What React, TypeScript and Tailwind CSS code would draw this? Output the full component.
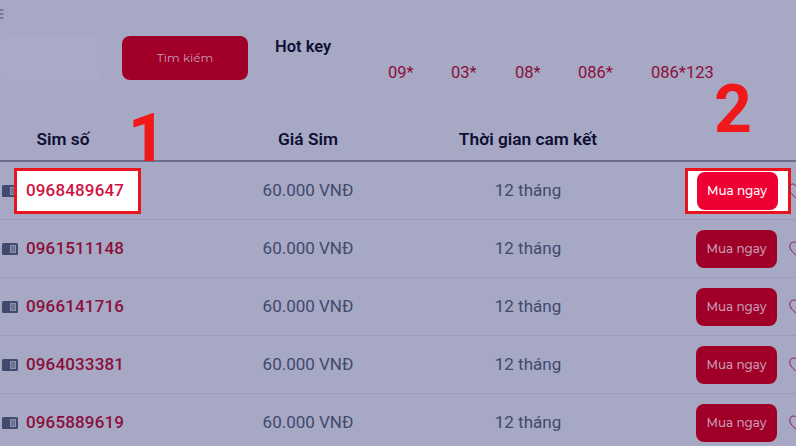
const rows = ['0968489647', '0961511148', '0966141716', '0964033381', '0965889619'];
const hotKeys = [
  { label: '09*', width: 'w-[63px]' },
  { label: '03*', width: 'w-[64px]' },
  { label: '08*', width: 'w-[63px]' },
  { label: '086*', width: 'w-[73px]' },
  { label: '086*123', width: 'w-[70px]' },
];

function SimIcon() {
  return (
    <svg width="16" height="12" viewBox="0 0 16 12" className="shrink-0">
      <rect width="16" height="12" rx="1.5" fill="#3f4a6e" />
      <rect x="8" y="2" width="6" height="8" fill="#8d90ab" />
      <path d="M9 4h4M9 6h4M9 8h4" stroke="#3f4a6e" strokeWidth="0.8" />
    </svg>
  );
}

function Heart() {
  return (
    <svg width="16" height="18" viewBox="0 0 16 18" fill="none" stroke="#8f1a45" strokeWidth="1" className="shrink-0">
      <path d="M8 16C4 12.5 .8 9.8 .8 6.3 .8 3.8 2.6 2 4.6 2 6 2 7.3 2.8 8 4.2 8.7 2.8 10 2 11.4 2c2 0 3.8 1.8 3.8 4.3 0 3.5-3.2 6.2-7.2 9.7z" />
    </svg>
  );
}

export default function App() {
  return (
    <div className="relative w-[796px] h-[446px] overflow-hidden bg-[#a7a8c3] font-['Roboto',sans-serif]">
      <div className="h-[36px] pt-[9px]">
        <svg width="4" height="10" viewBox="0 0 4 10" stroke="#4c4f6b" strokeWidth="1.2">
          <path d="M0 1h3.5M0 5h3.5M0 9h3.5" />
        </svg>
      </div>

      <div className="flex h-[124px] items-start">
        <div className="w-[102px] h-[44px] mt-px bg-[#a9aac5] rounded" />
        <button className="ml-[20px] flex w-[126px] h-[44px] items-center justify-center rounded-lg bg-[#a00028] text-[12px] text-[#c79ab4] font-['Montserrat','Open_Sans',sans-serif]">
          Tìm kiếm
        </button>
        <div className="ml-[27px]">
          <div className="mt-[1px] text-[16.5px] leading-[19px] font-semibold text-[#0e0f33]">Hot key</div>
          <div className="mt-[7px] ml-[113px] flex text-[16.5px] leading-[19px] text-[#8a0f3c]">
            {hotKeys.map((k) => (
              <span key={k.label} className={`${k.width} shrink-0 whitespace-nowrap`}>
                {k.label}
              </span>
            ))}
          </div>
        </div>
      </div>

      <div className="flex h-[0px] text-[17.3px] font-semibold text-[#0e0f33] leading-[19px] -translate-y-[30px]">
        <div className="w-[126px] shrink-0 text-center">Sim số</div>
        <div className="ml-[62px] w-[240px] shrink-0 text-center">Giá Sim</div>
        <div className="w-[200px] shrink-0 text-center">Thời gian cam kết</div>
      </div>

      <div className="border-t-2 border-[#6c6d8a]">
        {rows.map((num, i) => (
          <div key={num} className="flex h-[58px] items-center border-b border-[#9b9cb8]">
            <div className="flex w-[188px] shrink-0 items-center pl-[2px]">
              <SimIcon />
              {i === 0 ? (
                <span className="-ml-[4px] flex h-[46px] w-[127px] items-center border-[3px] border-[#e8141f] bg-white pl-[9px] text-[17px] font-medium tracking-[0.15px] text-[#d0123f]">
                  {num}
                </span>
              ) : (
                <span className="ml-[8px] text-[17px] font-medium tracking-[0.15px] text-[#8a0f3c]">{num}</span>
              )}
            </div>
            <div className="w-[240px] shrink-0 text-center text-[17px] text-[#3f4a6e]">60.000 VNĐ</div>
            <div className="w-[200px] shrink-0 text-center text-[17px] text-[#3f4a6e]">12 tháng</div>
            {i === 0 ? (
              <div className="ml-[57px] flex h-[46px] w-[106px] shrink-0 items-center justify-center border-[3px] border-[#e8141f] bg-white">
                <button className="mr-[2px] h-[38px] w-[81px] rounded-lg bg-[#ee0033] text-[12px] font-['Montserrat','Open_Sans',sans-serif] font-medium text-white">
                  Mua ngay
                </button>
              </div>
            ) : (
              <button className="ml-[68px] h-[38px] w-[81px] shrink-0 rounded-lg bg-[#a00028] text-[12px] font-['Montserrat','Open_Sans',sans-serif] font-medium text-[#c79ab4]">
                Mua ngay
              </button>
            )}
            <div className={i === 0 ? 'ml-[-3px] shrink-0' : 'ml-[12px] shrink-0'}>
              <Heart />
            </div>
          </div>
        ))}
      </div>

      <span className="absolute left-[128px] top-[103px] text-[66px] leading-[72px] font-bold text-[#f01818]">1</span>
      <span className="absolute left-[714px] top-[74px] text-[66px] leading-[72px] font-bold text-[#f01818]">2</span>
    </div>
  );
}
